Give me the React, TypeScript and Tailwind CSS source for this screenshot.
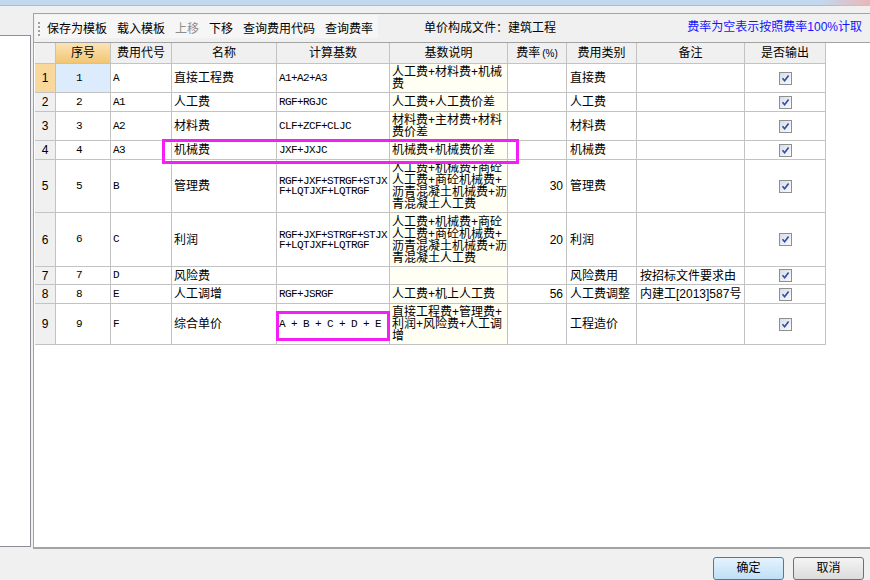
import React from 'react'

type Row = {
  n: number
  code: string
  name: string
  base: string[]
  desc: string[]
  rate?: string
  cat: string
  note?: string
  h: string
}

const rows: Row[] = [
  { n: 1, code: 'A', name: '直接工程费', base: ['A1+A2+A3'], desc: ['人工费+材料费+机械', '费'], cat: '直接费', h: 'h-[29px]' },
  { n: 2, code: 'A1', name: '人工费', base: ['RGF+RGJC'], desc: ['人工费+人工费价差'], cat: '人工费', h: 'h-[19px]' },
  { n: 3, code: 'A2', name: '材料费', base: ['CLF+ZCF+CLJC'], desc: ['材料费+主材费+材料', '费价差'], cat: '材料费', h: 'h-[29px]' },
  { n: 4, code: 'A3', name: '机械费', base: ['JXF+JXJC'], desc: ['机械费+机械费价差'], cat: '机械费', h: 'h-[19px]' },
  {
    n: 5,
    code: 'B',
    name: '管理费',
    base: ['RGF+JXF+STRGF+STJX', 'F+LQTJXF+LQTRGF'],
    desc: ['人工费+机械费+商砼', '人工费+商砼机械费+', '沥青混凝土机械费+沥', '青混凝土人工费'],
    rate: '30',
    cat: '管理费',
    h: 'h-[53px]',
  },
  {
    n: 6,
    code: 'C',
    name: '利润',
    base: ['RGF+JXF+STRGF+STJX', 'F+LQTJXF+LQTRGF'],
    desc: ['人工费+机械费+商砼', '人工费+商砼机械费+', '沥青混凝土机械费+沥', '青混凝土人工费'],
    rate: '20',
    cat: '利润',
    h: 'h-[54px]',
  },
  { n: 7, code: 'D', name: '风险费', base: [], desc: [], cat: '风险费用', note: '按招标文件要求由', h: 'h-[18px]' },
  { n: 8, code: 'E', name: '人工调增', base: ['RGF+JSRGF'], desc: ['人工费+机上人工费'], rate: '56', cat: '人工费调整', note: '内建工[2013]587号', h: 'h-[19px]' },
  { n: 9, code: 'F', name: '综合单价', base: ['A + B + C + D + E'], desc: ['直接工程费+管理费+', '利润+风险费+人工调', '增'], cat: '工程造价', h: 'h-[41px]' },
]

const cjk = "font-['Liberation_Sans','Noto_Sans_CJK_SC',sans-serif]"
const mono = "font-['Liberation_Mono','Noto_Sans_CJK_SC',monospace] text-[11px] tracking-[-0.6px]"
const line = 'border-r border-b border-[#c3c3c3]'

function Check() {
  return (
    <svg width="13" height="13" viewBox="0 0 13 13">
      <defs>
        <linearGradient id="cbg" x1="0" y1="0" x2="1" y2="1">
          <stop offset="0" stopColor="#d6dbe4" />
          <stop offset="1" stopColor="#fbfbfd" />
        </linearGradient>
      </defs>
      <rect x="0.5" y="0.5" width="12" height="12" fill="url(#cbg)" stroke="#8e8f8f" />
      <path d="M3.5 6.3 L5.6 8.8 L9.6 3.4" fill="none" stroke="#2c4ea6" strokeWidth="1.6" />
    </svg>
  )
}

export default function App() {
  return (
    <div className={`relative w-[870px] h-[580px] overflow-hidden bg-[#f0f0f0] text-[12px] text-black ${cjk}`}>
      {/* title strip */}
      <div className="h-[6px] bg-[#c2d8ef] border-b border-[#a9bdd3]" />
      <div className="absolute right-0 top-0 w-[50px] h-[6px] bg-linear-to-r from-transparent to-[#eab7b7]" />

      <div className="flex mt-[7px] h-[536px]">
        {/* left tree panel */}
        <div className="w-[31px] shrink-0 pt-[22px]">
          <div className="h-[512px] bg-white border-t border-r border-b border-[#8c9096]" />
        </div>

        {/* main panel */}
        <div className="ml-[2px] flex-1 flex flex-col border-l border-t border-b-2 border-[#a3a3a3]">
          {/* toolbar */}
          <div className="h-[28px] flex items-start">
            <div className="ml-[1px] mt-[1px] h-[23px] w-[343px] bg-[#f6f6f6] flex items-center pt-[5px]">
              <div className="ml-[3px] w-[2px] h-[14px] border-l-2 border-dotted border-[#a0a0a0]" />
              <div className="ml-[7px] flex gap-[10px] leading-[14px]">
                <span>保存为模板</span>
                <span>载入模板</span>
                <span className="text-[#8d8d8d]">上移</span>
                <span>下移</span>
                <span>查询费用代码</span>
                <span>查询费率</span>
              </div>
            </div>
            <div className="ml-[46px] mt-[7px] leading-[14px]">单价构成文件：建筑工程</div>
            <div className="ml-auto mr-[8px] mt-[6px] leading-[14px] text-[#1414ff]">费率为空表示按照费率100%计取</div>
          </div>

          {/* grid */}
          <div className="flex-1 bg-white border-t border-[#a3a3a3] pl-[1px]">
            <div className="relative w-[791px]">
              {/* header */}
              <div className="flex h-[21px] bg-[#f0f0f0]">
                <div className={`w-[21px] ${line}`} />
                <div className={`w-[55px] ${line} flex items-center justify-center bg-linear-to-b from-[#fbe4b4] to-[#f2c572]`}>序号</div>
                <div className={`w-[61px] ${line} flex items-center justify-center`}>费用代号</div>
                <div className={`w-[105px] ${line} flex items-center justify-center`}>名称</div>
                <div className={`w-[113px] ${line} flex items-center justify-center`}>计算基数</div>
                <div className={`w-[118px] ${line} flex items-center justify-center`}>基数说明</div>
                <div className={`w-[59px] ${line} flex items-center justify-center`}>
                  费率<span className="text-[10px] ml-[2px]">(%)</span>
                </div>
                <div className={`w-[70px] ${line} flex items-center justify-center`}>费用类别</div>
                <div className={`w-[108px] ${line} flex items-center justify-center`}>备注</div>
                <div className={`w-[81px] ${line} flex items-center justify-center`}>是否输出</div>
              </div>

              {rows.map((r) => (
                <div key={r.n} className={`flex ${r.h}`}>
                  <div
                    className={`w-[21px] ${line} flex items-center justify-center ${r.n === 1 ? 'bg-[#f9d89c]' : 'bg-[#f0f0f0]'}`}
                  >
                    {r.n}
                  </div>
                  <div className={`w-[55px] ${line} flex items-center pl-[20px] ${mono} ${r.n === 1 ? 'bg-[#ddecfc]' : ''}`}>
                    {r.n}
                  </div>
                  <div className={`w-[61px] ${line} flex items-center pl-[2px] ${mono}`}>{r.code}</div>
                  <div className={`w-[105px] ${line} flex items-center pl-[2px]`}>{r.name}</div>
                  <div className={`w-[113px] ${line} flex flex-col justify-center pl-[2px] leading-[10px] ${mono}`}>
                    {r.base.map((b) => (
                      <span key={b} className="whitespace-pre">{b}</span>
                    ))}
                  </div>
                  <div className={`w-[118px] ${line} bg-[#fffff3] flex flex-col justify-center pl-[2px] leading-[12px] overflow-hidden`}>
                    {r.desc.map((d) => (
                      <span key={d} className="whitespace-nowrap">{d}</span>
                    ))}
                  </div>
                  <div className={`w-[59px] ${line} flex items-center justify-end pr-[3px]`}>{r.rate}</div>
                  <div className={`w-[70px] ${line} flex items-center pl-[3px]`}>{r.cat}</div>
                  <div className={`w-[108px] ${line} flex items-center pl-[3px] whitespace-nowrap`}>{r.note}</div>
                  <div className={`w-[81px] ${line} flex items-center justify-center`}>
                    <Check />
                  </div>
                </div>
              ))}

              {/* annotation boxes */}
              <div className="absolute left-[127px] top-[96px] w-[357px] h-[25px] border-[3px] border-[#f51ef5]" />
              <div className="absolute left-[241px] top-[268px] w-[114px] h-[30px] border-[3px] border-[#f51ef5]" />
            </div>
          </div>
        </div>
      </div>

      {/* buttons */}
      <div className="flex justify-end gap-[9px] pr-[6px] pt-[8px]">
        <button className="w-[71px] h-[23px] rounded-[3px] border border-[#3c7fb1] bg-linear-to-b from-[#e6f3fd] to-[#bedff7] leading-[21px]">
          确定
        </button>
        <button className="w-[71px] h-[23px] rounded-[3px] border border-[#707070] bg-linear-to-b from-[#f4f4f4] to-[#dcdcdc] leading-[21px]">
          取消
        </button>
      </div>
    </div>
  )
}
